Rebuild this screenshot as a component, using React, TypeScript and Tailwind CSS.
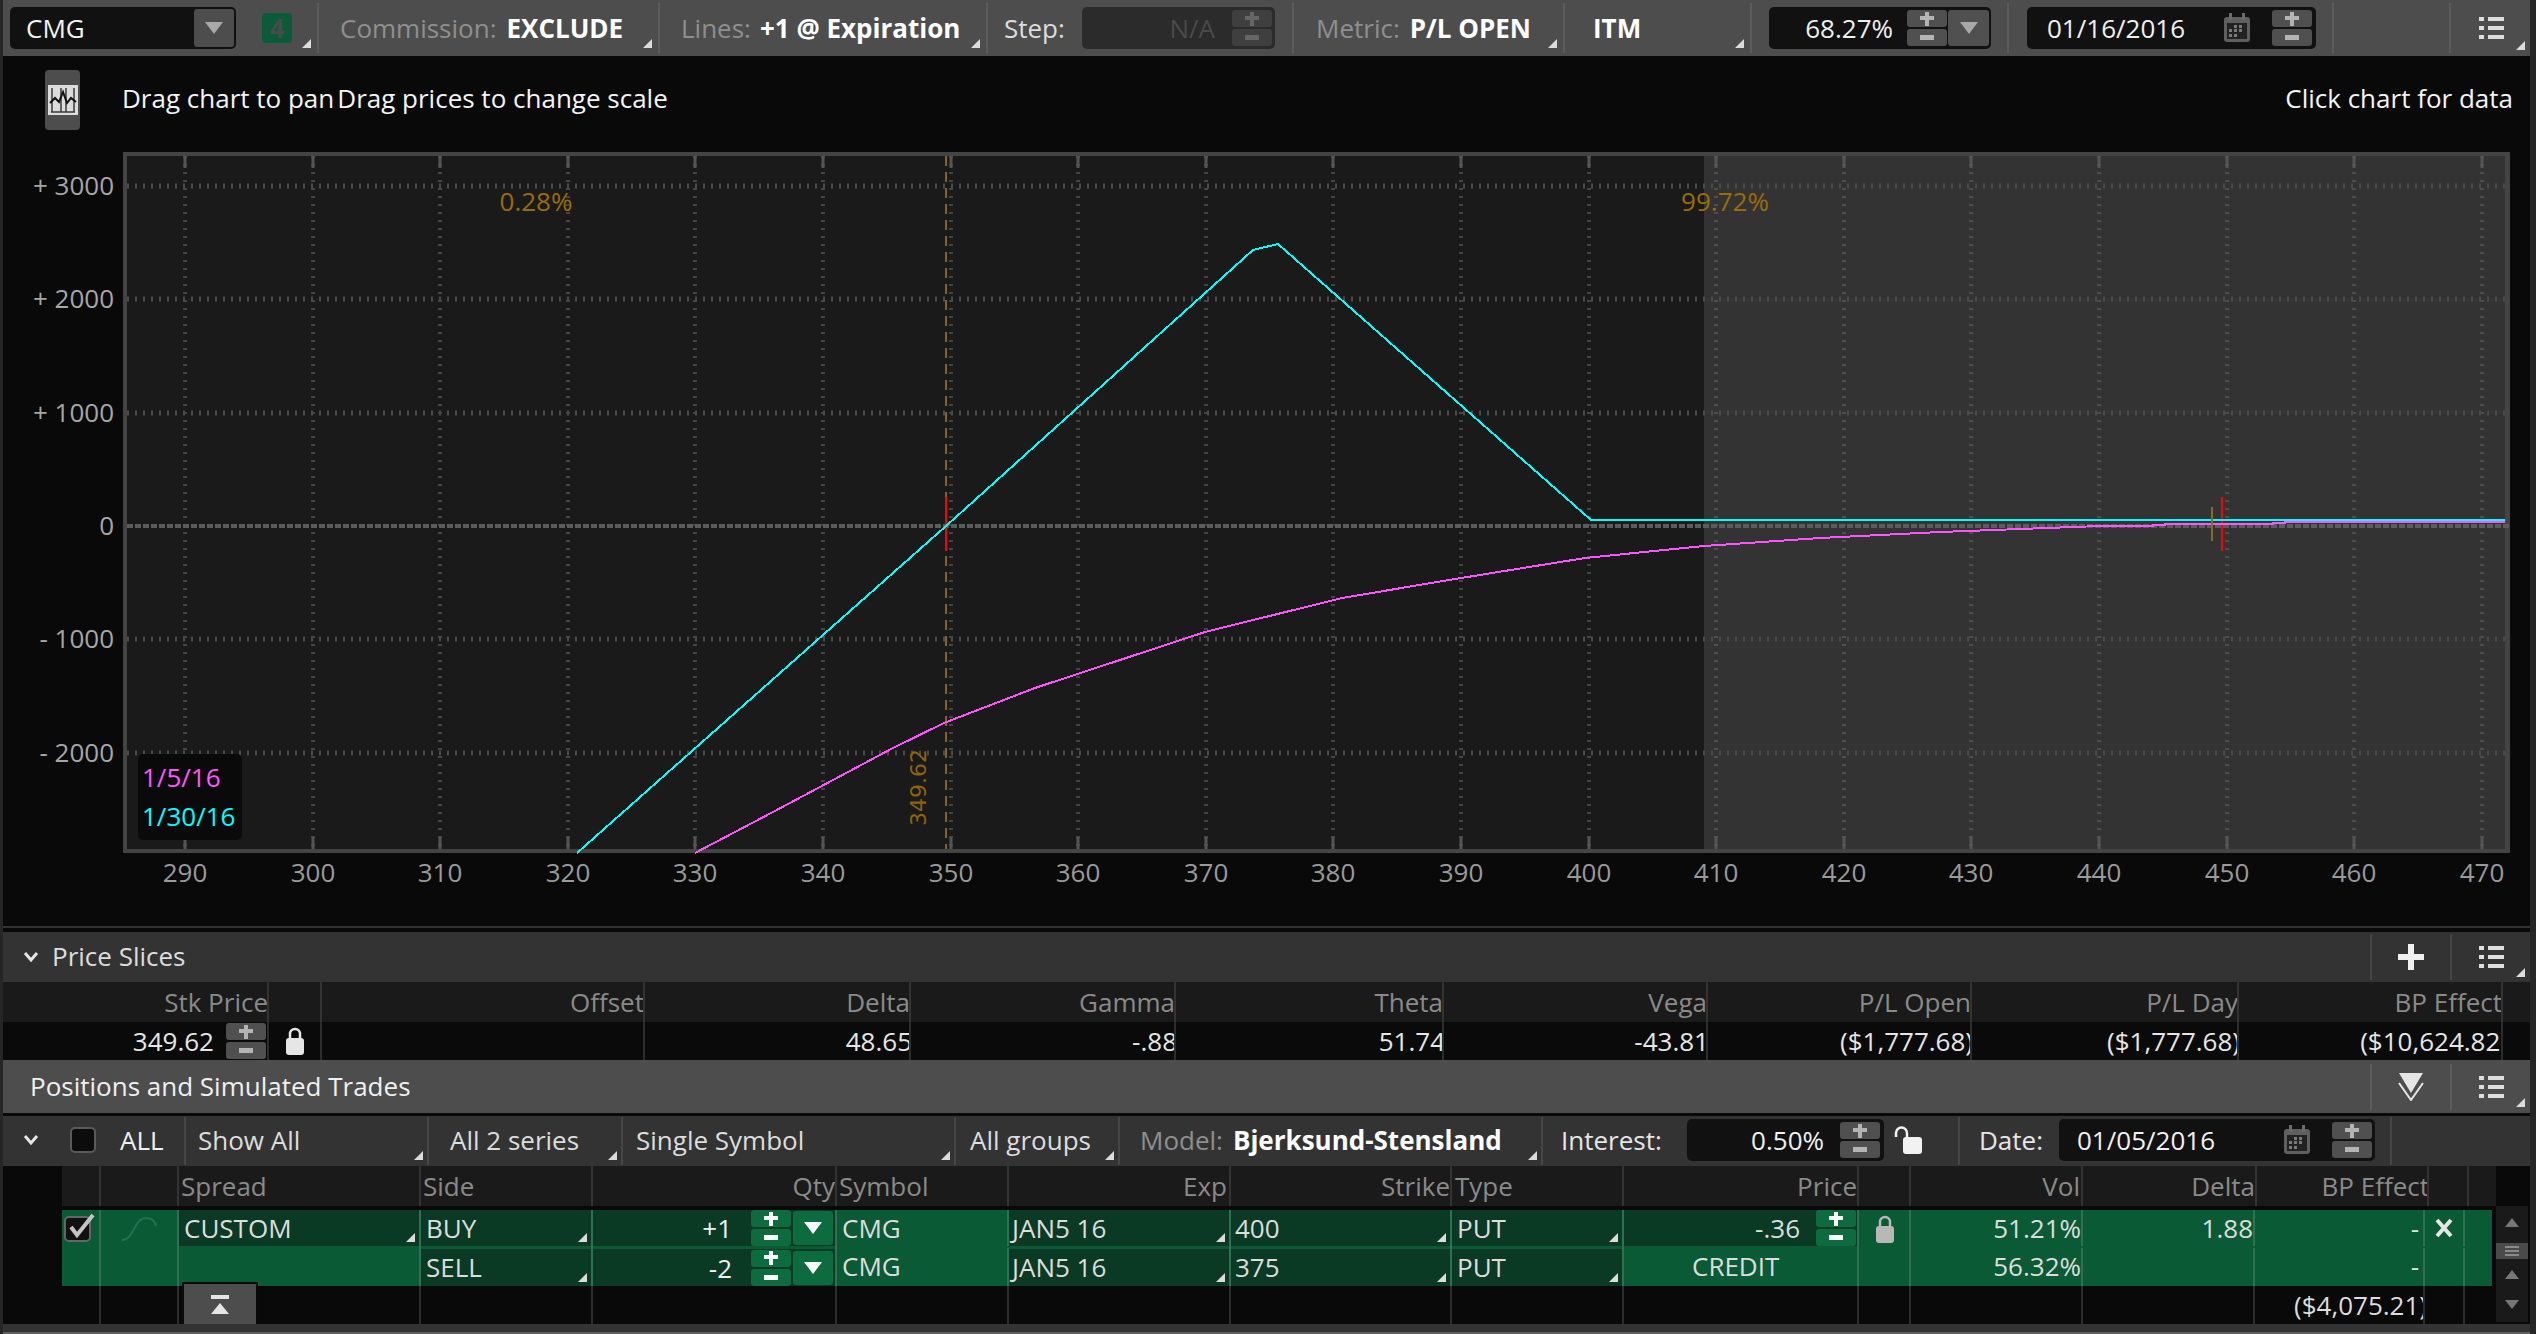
import type { ReactNode } from "react";

const xOf = (price: number) => 185 + (price - 290) * 12.76;
const yOf = (pl: number) => 526 - pl * 0.1133;

const X_TICKS = Array.from({ length: 19 }, (_, i) => 290 + i * 10);
const Y_TICKS = [
  { v: 3000, label: "+ 3000" },
  { v: 2000, label: "+ 2000" },
  { v: 1000, label: "+ 1000" },
  { v: 0, label: "0" },
  { v: -1000, label: "- 1000" },
  { v: -2000, label: "- 2000" },
];

const CYAN = "577,853 692,751 946,526 1253,250 1278,244 1591,520 2505,520";
const MAGENTA =
  "695,853 773,812 893,748 944,723 1035,688 1120,660 1205,632 1342,598 1455,579 1585,558 1704,546 1820,538 1940,532 2100,526 2153,526 2153,525 2165,525 2165,524 2273,524 2273,523 2285,523 2285,522 2505,522";

function Corner({ className = "right-[6px] bottom-[5px]" }: { className?: string }) {
  return (
    <svg className={`absolute ${className}`} width="9" height="9" viewBox="0 0 9 9">
      <polygon points="9,0 9,9 0,9" fill="#dcdcdc" />
    </svg>
  );
}

function Chevron() {
  return (
    <svg width="16" height="12" viewBox="0 0 16 12">
      <path d="M2 2 L8 9 L14 2" fill="none" stroke="#e6e6e6" strokeWidth="3" />
    </svg>
  );
}

function ListIcon() {
  return (
    <svg width="25" height="24" viewBox="0 0 25 24" fill="#dedede">
      <rect x="0" y="1" width="5" height="4" />
      <rect x="9" y="1" width="16" height="4" />
      <rect x="0" y="10" width="5" height="4" />
      <rect x="9" y="10" width="16" height="4" />
      <rect x="0" y="19" width="5" height="4" />
      <rect x="9" y="19" width="16" height="4" />
    </svg>
  );
}

function Calendar() {
  return (
    <svg width="28" height="30" viewBox="0 0 28 30">
      <rect x="1" y="4" width="26" height="25" rx="3" fill="#5f5f5f" />
      <rect x="4" y="10" width="20" height="16" fill="#222" />
      <rect x="6" y="0" width="3" height="7" fill="#6a6a6a" />
      <rect x="19" y="0" width="3" height="7" fill="#6a6a6a" />
      <g fill="#7a7a7a">
        <rect x="11" y="12" width="3" height="3" />
        <rect x="16" y="12" width="3" height="3" />
        <rect x="6" y="16" width="3" height="3" />
        <rect x="11" y="16" width="3" height="3" />
        <rect x="16" y="16" width="3" height="3" />
        <rect x="6" y="21" width="3" height="3" />
        <rect x="11" y="21" width="3" height="3" />
      </g>
    </svg>
  );
}

function Lock({ open = false, color = "#e6e6e6" }: { open?: boolean; color?: string }) {
  return (
    <svg width={open ? 30 : 20} height="28" viewBox={open ? "0 0 30 28" : "0 0 20 28"}>
      {open ? (
        <>
          <path d="M3 11 V7 a5 5 0 0 1 11 0 V12" fill="none" stroke={color} strokeWidth="2.5" />
          <rect x="10" y="11" width="19" height="17" rx="3" fill={color} />
        </>
      ) : (
        <>
          <path d="M5 12 V7 a5 5 0 0 1 10 0 V12" fill="none" stroke={color} strokeWidth="2.5" />
          <rect x="1" y="11" width="18" height="17" rx="3" fill={color} />
        </>
      )}
    </svg>
  );
}

function Stepper({ tone = "gray" }: { tone?: "gray" | "green" | "dim" }) {
  const bg = tone === "green" ? "bg-[#0d6b40]" : tone === "dim" ? "bg-[#3f3f3f]" : "bg-[#505050]";
  const ink = tone === "green" ? "#ffffff" : tone === "dim" ? "#666666" : "#b4b4b4";
  return (
    <div className="flex flex-col gap-[2px] w-[40px] shrink-0">
      <div className={`${bg} h-[17px] rounded-[3px] flex items-center justify-center`}>
        <svg width="14" height="14" viewBox="0 0 14 14" fill={ink}>
          <rect x="0" y="4" width="14" height="4" />
          <rect x="5" y="0" width="4" height="14" />
        </svg>
      </div>
      <div className={`${bg} h-[17px] rounded-[3px] flex items-center justify-center`}>
        <svg width="14" height="5" viewBox="0 0 14 5" fill={ink}>
          <rect x="0" y="0" width="14" height="5" />
        </svg>
      </div>
    </div>
  );
}

function DownButton({ className, ink }: { className: string; ink: string }) {
  return (
    <div className={`${className} rounded-[3px] flex items-center justify-center shrink-0`}>
      <svg width="18" height="12" viewBox="0 0 18 12">
        <polygon points="0,0 18,0 9,12" fill={ink} />
      </svg>
    </div>
  );
}

function ToolCell({ className, children }: { className: string; children?: ReactNode }) {
  return (
    <div className={`relative h-[50px] flex items-center shrink-0 border-r-2 border-[#5c5c5c] ${className}`}>
      {children}
    </div>
  );
}

function SubCell({ className, children, corner = true }: { className: string; children?: ReactNode; corner?: boolean }) {
  return (
    <div className={`relative h-[48px] pb-[2px] flex items-center shrink-0 border-r-2 border-[#464646] ${className}`}>
      {children}
      {corner && <Corner className="right-[4px] bottom-[5px]" />}
    </div>
  );
}

function Dark({ className, children }: { className: string; children?: ReactNode }) {
  return (
    <div className={`relative bg-[#0a3a24] flex items-center ${className}`}>
      {children}
      <Corner className="right-[4px] bottom-[4px]" />
    </div>
  );
}

function PriceChart() {
  return (
    <svg width="2527" height="774" viewBox="3 152 2527 774" className="block">
      <rect x="123" y="152" width="2387" height="701" fill="#444444" />
      <rect x="127" y="156" width="1577" height="693" fill="#1a1a1a" />
      <rect x="1704" y="156" width="801" height="693" fill="#333333" />

      {X_TICKS.map((p) => {
        const x = Math.round(xOf(p));
        return (
          <g key={p}>
            <line x1={x} x2={x} y1="156" y2="849" stroke={x > 1704 ? "#4e4e4e" : "#454545"} strokeWidth="4" strokeDasharray="2 6" />
            <line x1={x} x2={x} y1="156" y2="168" stroke="#555555" strokeWidth="3" />
            <line x1={x} x2={x} y1="837" y2="849" stroke="#555555" strokeWidth="3" />
            <text x={x} y="882" textAnchor="middle" fontSize="26" fill="#9a9a9a">
              {p}
            </text>
          </g>
        );
      })}

      {Y_TICKS.map(({ v, label }) => {
        const y = Math.round(yOf(v));
        return (
          <g key={v}>
            {v === 0 ? (
              <line x1="127" x2="2510" y1={y} y2={y} stroke="#5c5c5c" strokeWidth="4" strokeDasharray="6 2" />
            ) : (
              <line x1="127" x2="2505" y1={y} y2={y} stroke="#4a4a4a" strokeWidth="5" strokeDasharray="2 6" />
            )}
            <text x="114" y={y + 9} textAnchor="end" fontSize="26" fill="#a6a6a6">
              {label}
            </text>
          </g>
        );
      })}

      <line x1="946" x2="946" y1="156" y2="849" stroke="#8f6408" strokeWidth="2" strokeDasharray="10 6" />
      <line x1="946" x2="946" y1="497" y2="551" stroke="#ff0000" strokeWidth="2" />
      <line x1="2222" x2="2222" y1="497" y2="551" stroke="#ff0000" strokeWidth="2" />

      <polyline points={MAGENTA} fill="none" stroke="#ff55ff" strokeWidth="2" shapeRendering="crispEdges" />
      <polyline points={CYAN} fill="none" stroke="#00ffff" strokeWidth="2" shapeRendering="crispEdges" />
      <line x1="2212" x2="2212" y1="507" y2="541" stroke="#8a6a20" strokeWidth="2" />

      <text x="536" y="211" textAnchor="middle" fontSize="26" fill="#9a6c08">
        0.28%
      </text>
      <text x="1725" y="211" textAnchor="middle" fontSize="26" fill="#9a6c08">
        99.72%
      </text>
      <text
        transform="translate(926 826) rotate(-90)"
        fontSize="22"
        fill="#8f6408"
        className="font-['DejaVu_Sans',sans-serif]"
      >
        349.62
      </text>
    </svg>
  );
}

export default function App() {
  return (
    <div className="w-[2536px] h-[1334px] overflow-hidden bg-[#090909] border-l-[3px] border-r-[6px] border-[#262626] text-[26px] leading-none text-[#e6e6e6] font-['Open_Sans',sans-serif]">
      {/* top toolbar */}
      <div className="h-[56px] bg-[#4d4d4d] flex items-center">
        <ToolCell className="w-[316px] pl-[7px]">
          <div className="w-[226px] h-[42px] bg-[#111111] rounded-[5px] flex items-center justify-between pl-[16px] pr-[2px]">
            <span className="text-[#f2f2f2]">CMG</span>
            <DownButton className="w-[40px] h-[38px] bg-[#4d4d4d]" ink="#a8a8a8" />
          </div>
          <div className="ml-[26px] w-[30px] h-[30px] bg-[#0a5c38] rounded-[4px] flex items-center justify-center font-bold text-[#4a4a4a]">
            4
          </div>
          <Corner />
        </ToolCell>
        <ToolCell className="w-[341px] pl-[21px] gap-[10px]">
          <span className="text-[#8f8f8f]">Commission:</span>
          <span className="font-bold text-white">EXCLUDE</span>
          <Corner />
        </ToolCell>
        <ToolCell className="w-[328px] pl-[21px] gap-[9px]">
          <span className="text-[#8f8f8f]">Lines:</span>
          <span className="font-bold text-white">+1 @ Expiration</span>
          <Corner />
        </ToolCell>
        <ToolCell className="w-[306px] pl-[16px] pr-[17px] justify-between">
          <span className="text-[#dddddd]">Step:</span>
          <div className="w-[193px] h-[42px] bg-[#2b2b2b] rounded-[5px] flex items-center justify-end pr-[3px]">
            <span className="text-[#4a4a4a] mr-[17px]">N/A</span>
            <Stepper tone="dim" />
          </div>
        </ToolCell>
        <ToolCell className="w-[271px] pl-[22px] gap-[10px]">
          <span className="text-[#8f8f8f]">Metric:</span>
          <span className="font-bold text-white">P/L OPEN</span>
          <Corner />
        </ToolCell>
        <ToolCell className="w-[187px] pl-[28px]">
          <span className="font-bold text-white">ITM</span>
          <Corner />
        </ToolCell>
        <ToolCell className="w-[257px] pl-[17px]">
          <div className="w-[222px] h-[42px] bg-[#111111] rounded-[5px] flex items-center justify-end pr-[2px]">
            <span className="text-[#f0f0f0] mr-[14px]">68.27%</span>
            <Stepper />
            <DownButton className="ml-[1px] w-[41px] h-[36px] bg-[#505050]" ink="#a8a8a8" />
          </div>
        </ToolCell>
        <ToolCell className="w-[325px] pl-[18px]">
          <div className="w-[289px] h-[42px] bg-[#111111] rounded-[5px] flex items-center pl-[20px] pr-[4px]">
            <span className="text-[#f0f0f0]">01/16/2016</span>
            <div className="ml-auto mr-[21px]">
              <Calendar />
            </div>
            <Stepper />
          </div>
        </ToolCell>
        <ToolCell className="w-[117px]" />
        <div className="relative h-[50px] flex-1 flex items-center pl-[28px]">
          <ListIcon />
          <Corner className="right-[5px] bottom-[3px]" />
        </div>
      </div>

      {/* hint row */}
      <div className="h-[96px] pb-[8px] flex items-center">
        <div className="ml-[42px] w-[35px] h-[60px] bg-[#4d4d4d] rounded-[4px] flex items-center justify-center">
          <svg width="30" height="30" viewBox="0 0 30 30">
            <rect width="30" height="30" fill="#dcdcdc" />
            <path d="M4 3 V27 M13 3 V27 M18 3 V27 M26 3 V27 M3 27 H27" stroke="#3a3a3a" strokeWidth="1.5" fill="none" />
            <path d="M2 18 L7 13 L11 17 L15 7 L19 18 L23 13 L28 17" stroke="#111111" strokeWidth="2" fill="none" />
          </svg>
        </div>
        <span className="ml-[42px] mb-[4px] text-[#f4f4f4]">Drag chart to pan</span>
        <span className="ml-[3px] mb-[4px] text-[#f4f4f4]">Drag prices to change scale</span>
        <span className="ml-auto mr-[17px] mb-[4px] text-[#f4f4f4]">Click chart for data</span>
      </div>

      {/* chart */}
      <div className="relative h-[780px]">
        <PriceChart />
        <div className="h-[2px] bg-[#333333]" />
        <div className="absolute left-[135px] top-[602px] w-[104px] h-[86px] bg-[#0a0a0a] rounded-[5px] pl-[4px] flex flex-col justify-between pt-[10px] pb-[11px]">
          <span className="text-[#ff55ff]">1/5/16</span>
          <span className="text-[#00ffff]">1/30/16</span>
        </div>
      </div>

      {/* price slices */}
      <div className="h-[50px] bg-[#333333] flex items-center">
        <div className="ml-[20px]">
          <Chevron />
        </div>
        <span className="ml-[13px] mb-[2px] text-[#dddddd]">Price Slices</span>
        <div className="relative ml-auto h-[46px] w-[80px] border-l-2 border-[#464646] flex items-center justify-center">
          <svg width="26" height="26" viewBox="0 0 26 26" fill="#f0f0f0">
            <rect x="0" y="10" width="26" height="6" />
            <rect x="10" y="0" width="6" height="26" />
          </svg>
        </div>
        <div className="relative h-[46px] w-[80px] border-l-2 border-[#464646] flex items-center pl-[27px]">
          <ListIcon />
          <Corner className="right-[5px] bottom-[3px]" />
        </div>
      </div>
      <div className="h-[40px] bg-[#1a1a1a] grid grid-cols-[266px_53px_323px_266px_265px_268px_264px_264px_267px_264px_27px] items-stretch text-[#8a8a8a]">
        {["Stk Price", "", "Offset", "Delta", "Gamma", "Theta", "Vega", "P/L Open", "P/L Day", "BP Effect", ""].map((h, i) => (
          <div key={i} className="border-r-2 border-[#333333] last:border-r-0 flex items-center justify-end whitespace-nowrap overflow-hidden">
            <span className="-mr-[1px]">{h}</span>
          </div>
        ))}
      </div>
      <div className="h-[38px] bg-[#0a0a0a] grid grid-cols-[266px_53px_323px_266px_265px_268px_264px_264px_267px_264px_27px] items-stretch text-[#e6e6e6]">
        <div className="border-r-2 border-[#2c2c2c] flex items-center justify-end pr-[1px]">
          <span className="mr-[12px]">349.62</span>
          <Stepper tone="gray" />
        </div>
        <div className="border-r-2 border-[#2c2c2c] flex items-center pl-[16px]">
          <Lock />
        </div>
        <div className="border-r-2 border-[#2c2c2c]" />
        {["48.65", "-.88", "51.74", "-43.81", "($1,777.68)", "($1,777.68)"].map((v, i) => (
          <div key={i} className="border-r-2 border-[#2c2c2c] flex items-center justify-end whitespace-nowrap overflow-hidden">
            <span className="-mr-[3px]">{v}</span>
          </div>
        ))}
        <div className="border-r-2 border-[#2c2c2c] flex items-center justify-end whitespace-nowrap overflow-hidden">
          <span className="-mr-[7px]">($10,624.82)</span>
        </div>
        <div />
      </div>

      {/* positions header */}
      <div className="h-[53px] bg-[#4d4d4d] flex items-center">
        <span className="ml-[27px] mb-[2px] text-[#f0f0f0]">Positions and Simulated Trades</span>
        <div className="relative ml-auto h-[46px] w-[80px] border-l-2 border-[#5c5c5c] flex items-center justify-center">
          <svg width="26" height="28" viewBox="0 0 26 28">
            <polygon points="1,0 25,0 13,20" fill="#e6e6e6" />
            <path d="M1 10 L13 27 L25 10" fill="none" stroke="#e6e6e6" strokeWidth="2" />
          </svg>
        </div>
        <div className="relative h-[46px] w-[80px] border-l-2 border-[#5c5c5c] flex items-center pl-[27px]">
          <ListIcon />
          <Corner className="right-[5px] bottom-[3px]" />
        </div>
      </div>
      <div className="h-[3px] bg-[#090909]" />

      {/* positions toolbar */}
      <div className="h-[50px] bg-[#333333] flex items-center">
        <SubCell className="w-[183px] pl-[20px]" corner={false}>
          <Chevron />
          <div className="ml-[31px] w-[26px] h-[26px] bg-[#0c0c0c] border-2 border-[#5a5a5a] rounded-[5px]" />
          <span className="ml-[24px] text-[#f0f0f0]">ALL</span>
        </SubCell>
        <SubCell className="w-[243px] pl-[12px] text-[#dddddd]">Show All</SubCell>
        <SubCell className="w-[194px] pl-[21px] text-[#dddddd]">All 2 series</SubCell>
        <SubCell className="w-[333px] pl-[13px] text-[#dddddd]">Single Symbol</SubCell>
        <SubCell className="w-[164px] pl-[14px] text-[#dddddd]">All groups</SubCell>
        <SubCell className="w-[423px] pl-[20px] gap-[10px]">
          <span className="text-[#8f8f8f]">Model:</span>
          <span className="font-bold text-white">Bjerksund-Stensland</span>
        </SubCell>
        <SubCell className="w-[417px] pl-[18px]" corner={false}>
          <span className="w-[126px] text-[#e6e6e6]">Interest:</span>
          <div className="w-[197px] h-[42px] bg-[#111111] rounded-[5px] flex items-center justify-end pr-[4px]">
            <span className="text-[#f0f0f0] mr-[16px]">0.50%</span>
            <Stepper />
          </div>
          <div className="ml-[9px]">
            <Lock open color="#f2f2f2" />
          </div>
        </SubCell>
        <SubCell className="w-[432px] pl-[19px]" corner={false}>
          <span className="w-[80px] text-[#e6e6e6]">Date:</span>
          <div className="w-[316px] h-[42px] bg-[#111111] rounded-[5px] flex items-center pl-[18px] pr-[3px]">
            <span className="text-[#f0f0f0]">01/05/2016</span>
            <div className="ml-auto mr-[21px]">
              <Calendar />
            </div>
            <Stepper />
          </div>
        </SubCell>
      </div>

      {/* positions table */}
      <div className="ml-[59px] w-[2434px] h-[40px] bg-[#1a1a1a] grid grid-cols-[39px_78px_242px_172px_244px_172px_222px_221px_172px_235px_52px_172px_174px_172px_40px_27px] text-[#8a8a8a]">
        <div className="border-r-2 border-[#333333]" />
        <div className="border-r-2 border-[#333333]" />
        <div className="border-r-2 border-[#333333] flex items-center pl-[2px]">Spread</div>
        <div className="border-r-2 border-[#333333] flex items-center pl-[2px]">Side</div>
        <div className="border-r-2 border-[#333333] flex items-center justify-end">Qty</div>
        <div className="border-r-2 border-[#333333] flex items-center pl-[2px]">Symbol</div>
        <div className="border-r-2 border-[#333333] flex items-center justify-end pr-[2px]">Exp</div>
        <div className="border-r-2 border-[#333333] flex items-center justify-end">Strike</div>
        <div className="border-r-2 border-[#333333] flex items-center pl-[3px]">Type</div>
        <div className="border-r-2 border-[#333333] flex items-center justify-end">Price</div>
        <div className="border-r-2 border-[#333333]" />
        <div className="border-r-2 border-[#333333] flex items-center justify-end pr-[1px]">Vol</div>
        <div className="border-r-2 border-[#333333] flex items-center justify-end">Delta</div>
        <div className="border-r-2 border-[#333333] flex items-center justify-end whitespace-nowrap overflow-hidden">
          <span className="-mr-[2px]">BP Effect</span>
        </div>
        <div className="border-r-2 border-[#333333]" />
        <div />
      </div>

      <div className="flex h-[118px]">
        <div className="ml-[59px] w-[2430px] pt-[4px]">
          {/* first leg */}
          <div className="h-[38px] bg-[#0a5a36] grid grid-cols-[39px_78px_242px_172px_244px_172px_222px_221px_172px_235px_52px_172px_172px_170px_40px_27px] text-[#dddddd]">
            <div className="border-r-2 border-white/15 pl-[2px] pt-[4px]">
              <svg width="32" height="28" viewBox="0 0 32 28">
                <rect x="1" y="3" width="25" height="24" rx="4" fill="#111111" stroke="#666666" strokeWidth="2" />
                <path d="M7 13 L13 21 L29 1" fill="none" stroke="#c4c4c4" strokeWidth="4" />
              </svg>
            </div>
            <div className="border-r-2 border-white/15 flex items-center justify-center">
              <svg width="38" height="26" viewBox="0 0 38 26">
                <path d="M2 24 C14 24 14 2 26 2 C32 2 35 5 36 10" fill="none" stroke="#25704e" strokeWidth="2" />
              </svg>
            </div>
            <div className="border-r-2 border-white/15">
              <Dark className="h-[36px] pl-[5px]">CUSTOM</Dark>
            </div>
            <div className="border-r-2 border-white/15">
              <Dark className="h-[36px] pl-[5px]">BUY</Dark>
            </div>
            <div className="border-r-2 border-white/15">
              <div className="h-[36px] bg-[#0a3a24] flex items-center justify-end pr-[2px] text-[#f0f0f0]">
                <span className="mr-[19px]">+1</span>
                <Stepper tone="green" />
                <DownButton className="ml-[2px] w-[40px] h-[34px] bg-[#0d6b40]" ink="#ffffff" />
              </div>
            </div>
            <div className="border-r-2 border-white/15 flex items-center pl-[5px] h-[36px]">CMG</div>
            <div className="border-r-2 border-white/15">
              <Dark className="h-[36px] pl-[3px]">JAN5 16</Dark>
            </div>
            <div className="border-r-2 border-white/15">
              <Dark className="h-[36px] pl-[4px]">400</Dark>
            </div>
            <div className="border-r-2 border-white/15">
              <Dark className="h-[36px] pl-[5px]">PUT</Dark>
            </div>
            <div className="border-r-2 border-white/15">
              <div className="h-[36px] bg-[#0a3a24] flex items-center justify-end pr-[1px]">
                <span className="mr-[16px]">-.36</span>
                <Stepper tone="green" />
              </div>
            </div>
            <div className="border-r-2 border-white/15 flex items-center pl-[16px] h-full">
              <Lock color="#b8b8b8" />
            </div>
            <div className="border-r-2 border-white/15 flex items-center justify-end h-[36px]">51.21%</div>
            <div className="border-r-2 border-white/15 flex items-center justify-end h-[36px]">1.88</div>
            <div className="border-r-2 border-white/15 flex items-center justify-end h-[36px] pr-[4px]">-</div>
            <div className="border-r-2 border-white/15 flex items-center pl-[10px] h-[36px]">
              <svg width="18" height="20" viewBox="0 0 18 20">
                <path d="M2 2 L16 18 M16 2 L2 18" stroke="#e6e6e6" strokeWidth="4" />
              </svg>
            </div>
            <div />
          </div>

          {/* second leg */}
          <div className="h-[38px] bg-[#0a5a36] grid grid-cols-[39px_78px_242px_172px_244px_172px_222px_221px_172px_235px_52px_172px_172px_170px_40px_27px] text-[#dddddd]">
            <div className="border-r-2 border-white/15" />
            <div className="border-r-2 border-white/15" />
            <div className="border-r-2 border-white/15" />
            <div className="border-r-2 border-white/15 pt-[1px]">
              <Dark className="h-[37px] pl-[5px] pb-[2px]">SELL</Dark>
            </div>
            <div className="border-r-2 border-white/15 pt-[1px]">
              <div className="h-[37px] bg-[#0a3a24] flex items-center justify-end pr-[2px] text-[#f0f0f0]">
                <span className="mr-[19px]">-2</span>
                <Stepper tone="green" />
                <DownButton className="ml-[2px] w-[40px] h-[34px] bg-[#0d6b40]" ink="#ffffff" />
              </div>
            </div>
            <div className="border-r-2 border-white/15 flex items-center pl-[5px] pb-[2px]">CMG</div>
            <div className="border-r-2 border-white/15 pt-[1px]">
              <Dark className="h-[37px] pl-[3px] pb-[2px]">JAN5 16</Dark>
            </div>
            <div className="border-r-2 border-white/15 pt-[1px]">
              <Dark className="h-[37px] pl-[4px] pb-[2px]">375</Dark>
            </div>
            <div className="border-r-2 border-white/15 pt-[1px]">
              <Dark className="h-[37px] pl-[5px] pb-[2px]">PUT</Dark>
            </div>
            <div className="border-r-2 border-white/15 flex items-center pl-[68px] pb-[2px]">CREDIT</div>
            <div className="border-r-2 border-white/15" />
            <div className="border-r-2 border-white/15 flex items-center justify-end pb-[2px]">56.32%</div>
            <div className="border-r-2 border-white/15" />
            <div className="border-r-2 border-white/15 flex items-center justify-end pr-[4px] pb-[2px]">-</div>
            <div className="border-r-2 border-white/15" />
            <div />
          </div>

          {/* totals */}
          <div className="h-[38px] grid grid-cols-[39px_78px_242px_172px_244px_172px_222px_221px_172px_235px_52px_172px_172px_170px_40px_27px] text-[#dddddd]">
            <div className="border-r-2 border-[#2c2c2c]" />
            <div className="border-r-2 border-[#2c2c2c]" />
            <div className="relative border-r-2 border-[#2c2c2c]">
              <div className="absolute left-[3px] top-[-4px] w-[76px] h-[42px] bg-[#4d4d4d] border-t-2 border-x-2 border-[#0a0a0a] flex flex-col items-center justify-center gap-[4px]">
                <div className="w-[18px] h-[4px] bg-[#e6e6e6]" />
                <svg width="18" height="11" viewBox="0 0 18 11">
                  <polygon points="9,0 18,11 0,11" fill="#e6e6e6" />
                </svg>
              </div>
            </div>
            <div className="border-r-2 border-[#2c2c2c]" />
            <div className="border-r-2 border-[#2c2c2c]" />
            <div className="border-r-2 border-[#2c2c2c]" />
            <div className="border-r-2 border-[#2c2c2c]" />
            <div className="border-r-2 border-[#2c2c2c]" />
            <div className="border-r-2 border-[#2c2c2c]" />
            <div className="border-r-2 border-[#2c2c2c]" />
            <div className="border-r-2 border-[#2c2c2c]" />
            <div className="border-r-2 border-[#2c2c2c]" />
            <div className="border-r-2 border-[#2c2c2c]" />
            <div className="border-r-2 border-[#2c2c2c] flex items-center justify-end whitespace-nowrap overflow-hidden">
              <span className="-mr-[4px]">($4,075.21)</span>
            </div>
            <div className="border-r-2 border-[#2c2c2c]" />
            <div />
          </div>
        </div>

        {/* scrollbar */}
        <div className="ml-[4px] w-[32px] h-[116px] bg-[#1a1a1a] flex flex-col items-center relative">
          <svg className="mt-[12px]" width="14" height="9" viewBox="0 0 14 9">
            <polygon points="7,0 14,9 0,9" fill="#777777" />
          </svg>
          <div className="mt-[16px] w-full h-[16px] bg-[#4a4a4a] flex flex-col items-center justify-center gap-[2px]">
            <div className="w-[14px] h-[2px] bg-[#8a8a8a]" />
            <div className="w-[14px] h-[2px] bg-[#8a8a8a]" />
            <div className="w-[14px] h-[2px] bg-[#8a8a8a]" />
          </div>
          <svg className="mt-[11px]" width="14" height="9" viewBox="0 0 14 9">
            <polygon points="7,0 14,9 0,9" fill="#777777" />
          </svg>
          <svg className="mt-[21px]" width="14" height="9" viewBox="0 0 14 9">
            <polygon points="0,0 14,0 7,9" fill="#777777" />
          </svg>
        </div>
      </div>

      <div className="h-[10px] bg-[#333333] border-b-2 border-[#5e5e5e]" />
    </div>
  );
}
